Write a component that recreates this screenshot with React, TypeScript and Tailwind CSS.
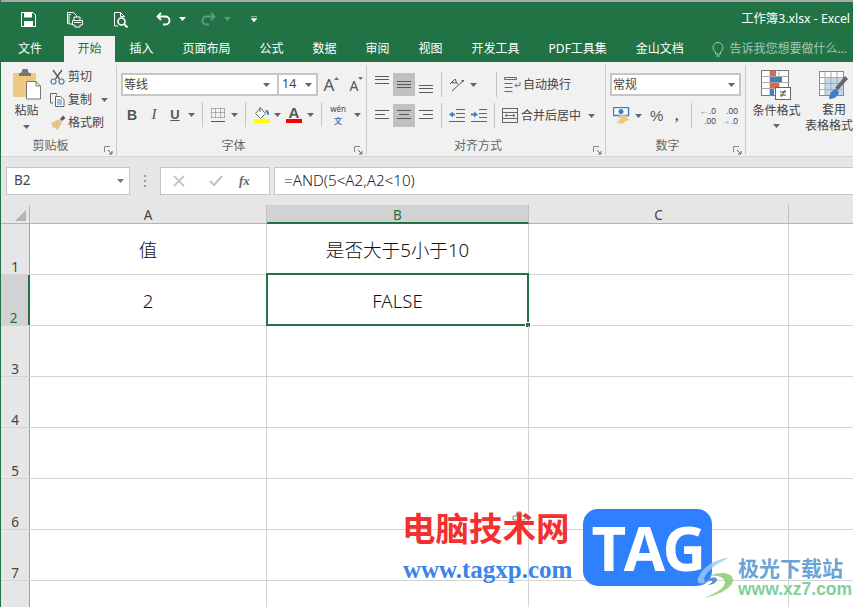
import React from "react";

const Arrow = ({ c = "#666", className = "" }: { c?: string; className?: string }) => (
  <svg width="7" height="4" viewBox="0 0 7 4" className={`shrink-0 ${className}`}>
    <path d="M0 0h7L3.5 4z" fill={c} />
  </svg>
);

const Launcher = () => (
  <svg width="9" height="9" viewBox="0 0 9 9" className="shrink-0">
    <path d="M.5 6V.5H6" fill="none" stroke="#888" />
    <path d="M4 4l4 4M8 5v3H5" fill="none" stroke="#666" />
  </svg>
);

const Sep = () => <div className="w-px h-[25px] bg-[#c6c6c6] shrink-0" />;

const Lines = ({ rows, hl }: { rows: [number, number, number][]; hl?: boolean }) => (
  <div className={`w-[22px] h-[23px] shrink-0 ${hl ? "bg-[#c0c0c0]" : ""}`}>
    <svg width="22" height="23" viewBox="0 0 22 23">
      {rows.map(([x, y, w], i) => (
        <rect key={i} x={x} y={y} width={w} height="1" fill="#595959" />
      ))}
    </svg>
  </div>
);

const SmallRow = ({ icon, label, arrow }: { icon: React.ReactNode; label: string; arrow?: boolean }) => (
  <div className="h-[23.5px] flex items-center">
    <div className="w-[19px] flex justify-center">{icon}</div>
    <span className="text-[12px] text-[#444] ml-[1px] whitespace-nowrap">{label}</span>
    {arrow && <Arrow className="ml-[9px]" />}
  </div>
);

const Group = ({ w, label, children }: { w: string; label: string; children: React.ReactNode }) => (
  <div className={`${w} shrink-0 h-[90px] border-r border-[#c9c9c9] flex flex-col mt-[3px]`}>
    <div className="h-[69px] flex">{children}</div>
    <div className="flex-1 flex items-center relative pt-[2px] pr-[16px]">
      <span className="flex-1 text-center text-[12px] text-[#666]">{label}</span>
      <span className="absolute right-[3px] bottom-[0px]">
        <Launcher />
      </span>
    </div>
  </div>
);

const Col = ({ t, sel, w }: { t: string; sel?: boolean; w: string }) => (
  <div className={`${w} shrink-0 text-center text-[13.5px] leading-[20px] h-[19px] border-r ${sel ? "bg-[#d2d2d2] text-[#217346] border-[#c0c0c0] border-b-2 border-b-[#217346]" : "text-[#444] border-[#c0c0c0] border-b border-b-[#b4b4b4]"}`}>
    {t}
  </div>
);

const Cell = ({ w, children, last }: { w: string; children?: React.ReactNode; last?: boolean }) => (
  <div className={`${w} shrink-0 h-full flex items-center justify-center text-[18.6px] text-[#111] font-light pt-[1px] ${last ? "" : "border-r border-[#d4d4d4]"}`}>{children}</div>
);

const Row = ({ n, a, b, sel }: { n?: number; a?: string; b?: string; sel?: boolean }) => (
  <div className="h-[51px] flex border-b border-[#d4d4d4] shrink-0">
    <div className={`w-[29px] shrink-0 flex items-end justify-center text-[13.5px] leading-[13px] border-r ${sel ? "bg-[#d2d2d2] text-[#217346] border-r-2 border-r-[#217346] pr-[2px]" : "bg-[#e6e6e6] text-[#444] border-[#9f9f9f]"}`}>
      {n}
    </div>
    <Cell w="w-[237px]">{a}</Cell>
    <div className="relative shrink-0 w-[262px] h-full">
      <Cell w="w-[262px]">{b}</Cell>
      {sel && (
        <div className="absolute left-[-1px] top-[-2px] w-[263px] h-[53px] border-2 border-[#217346]">
          <div className="absolute right-[-4px] bottom-[-4px] w-[6px] h-[6px] bg-[#217346] border border-white" />
        </div>
      )}
    </div>
    <Cell w="w-[260px]" />
    <Cell w="flex-1" last />
  </div>
);

export default function App() {
  const tabs = ["插入", "页面布局", "公式", "数据", "审阅", "视图", "开发工具", "PDF工具集", "金山文档"];
  return (
    <div className="relative w-[853px] h-[607px] overflow-hidden bg-white select-none border-l border-[#217346]" style={{ fontFamily: '"Noto Sans","Noto Sans CJK SC",sans-serif' }}>
      {/* title + tabs */}
      <div className="-ml-px bg-[#217346] border-t-2 border-[#a9a9a9] h-[62px] flex flex-col">
        <div className="h-[34px] flex items-center text-white">
          <div className="ml-[21px] w-[45px]">
            <svg width="15" height="15" viewBox="0 0 15 15">
              <path d="M.5.5h11.5l2.500 2.500v11.500H.5z" fill="none" stroke="#fff" />
              <path d="M3 1h8v4.500H3zM3 9h9v5.500H3z" fill="#fff" />
            </svg>
          </div>
          <div className="w-[47px]">
            <svg width="17" height="17" viewBox="0 0 17 17">
              <path d="M1.500 13V1.500h6l3 3V6M5 3.500h-2V13h3" fill="none" stroke="#fff" />
              <path d="M8 9V6h6v3M6.500 9.500h10v4.500h-2.500v2H9v-2H6.500z" fill="none" stroke="#fff" />
              <rect x="8" y="11" width="7" height="1" fill="#fff" />
            </svg>
          </div>
          <div className="w-[43px]">
            <svg width="16" height="17" viewBox="0 0 16 17">
              <path d="M5 15H1.500V1.500h6l3.500 3.500v1.500M7.500 1.500v4H11" fill="none" stroke="#fff" />
              <circle cx="8.500" cy="10.500" r="3.500" fill="none" stroke="#fff" strokeWidth="1.600" />
              <path d="M11 13l3.500 3.500" stroke="#fff" strokeWidth="2" />
            </svg>
          </div>
          <svg width="15" height="14" viewBox="0 0 15 14" className="shrink-0">
            <path d="M5 1L1.500 4.500 5 8M2 4.500h7.500a4 4 0 0 1 0 8H7" fill="none" stroke="#fff" strokeWidth="1.800" />
          </svg>
          <Arrow c="#fff" className="ml-[8px]" />
          <svg width="15" height="14" viewBox="0 0 15 14" className="shrink-0 ml-[15px]">
            <path d="M10 1l3.500 3.500L10 8M13 4.500H5.500a4 4 0 0 0 0 8H8" fill="none" stroke="#5f9c7c" strokeWidth="1.800" />
          </svg>
          <Arrow c="#5f9c7c" className="ml-[8px]" />
          <svg width="6" height="6" viewBox="0 0 6 6" className="shrink-0 ml-[20px]">
            <path d="M0 .5h6M0 2.500h6L3 6z" fill="#fff" stroke="#fff" strokeWidth=".5" />
          </svg>
          <span className="ml-auto mr-[3px] text-[12.3px] text-white whitespace-nowrap">工作簿3.xlsx - Excel</span>
        </div>
        <div className="h-[26px] flex items-stretch text-[12px] text-white">
          <div className="w-[52px] ml-[4px] mr-[8px] flex items-center justify-center">文件</div>
          <div className="w-[51px] flex items-center justify-center bg-[#f1f1f1] text-[#217346]">开始</div>
          {tabs.map((t) => (
            <div key={t} className="px-[14.5px] flex items-center whitespace-nowrap">{t}</div>
          ))}
          <div className="flex items-center ml-[14px] text-[#a7c7b5]">
            <svg width="12" height="15" viewBox="0 0 12 15" className="shrink-0 mr-[5px]">
              <path d="M3.500 10C2 8.500 1 7.500 1 5.500a5 5 0 0 1 10 0c0 2-1 3-2.500 4.500V12h-5zM4 14h4" fill="none" stroke="#a7c7b5" />
            </svg>
            <span className="whitespace-nowrap">告诉我您想要做什么...</span>
          </div>
        </div>
      </div>

      {/* ribbon */}
      <div className="h-[95px] bg-[#f1f1f1] border-b border-[#d4d4d4] flex overflow-hidden">
        <Group w="w-[116px]" label="剪贴板">
          <div className="w-[48px] flex flex-col items-center pl-[3px] pt-[4px]">
            <svg width="30" height="31" viewBox="0 0 30 31" className="shrink-0">
              <rect x="1" y="4" width="23" height="24" rx="1" fill="#efc981" />
              <path d="M9 4l1-2a3 3 0 0 1 6 0l1 2h2v3H7V4z" fill="#777" />
              <path d="M14.500 12.500H24l4.500 4.500v13h-14z" fill="#fff" stroke="#777" />
              <path d="M24 12.500V17h4.500" fill="none" stroke="#777" />
            </svg>
            <span className="text-[12px] text-[#444] leading-[17px] mt-[2px]">粘贴</span>
            <Arrow className="mt-[6px]" />
          </div>
          <div className="flex flex-col pt-[0px] -ml-[1px]">
            <SmallRow
              label="剪切"
              icon={
                <svg width="15" height="16" viewBox="0 0 15 16">
                  <path d="M3 1l6.500 9M12 1L5.500 10" stroke="#555" strokeWidth="1.300" />
                  <circle cx="3.500" cy="12.500" r="2.500" fill="none" stroke="#3f7fc1" strokeWidth="1.200" />
                  <circle cx="11.500" cy="12.500" r="2.500" fill="none" stroke="#3f7fc1" strokeWidth="1.200" />
                </svg>
              }
            />
            <SmallRow
              label="复制"
              arrow
              icon={
                <svg width="15" height="14" viewBox="0 0 15 14">
                  <path d="M.5.5h6v2M3 10H.5V.5" fill="none" stroke="#666" />
                  <path d="M5.500 3.500h5l3.500 3v7H5.500z" fill="#fff" stroke="#666" />
                  <path d="M7 7h5M7 9h5M7 11h5" stroke="#3f7fc1" />
                </svg>
              }
            />
            <SmallRow
              label="格式刷"
              icon={
                <svg width="16" height="15" viewBox="0 0 16 15">
                  <path d="M10 4l3-3.500 2.500 2.500L12 6z" fill="#595959" />
                  <path d="M1 8l8-4 3 3-4 8L5 13l-1-1-1 1z" fill="#e8c387" />
                </svg>
              }
            />
          </div>
        </Group>

        <Group w="w-[250px]" label="字体">
          <div className="flex flex-col pl-[4px]">
            <div className="h-[23px] mt-[8px] flex items-center">
              <div className="w-[157px] h-[23px] bg-white border-2 border-[#c6c6c6] border-r flex items-center px-[1px] justify-between pr-[7px]">
                <span className="text-[12px] text-[#444] leading-none">等线</span>
                <Arrow />
              </div>
              <div className="w-[40px] h-[23px] bg-white border-2 border-[#c6c6c6] border-l flex items-center justify-between pl-[3px] pr-[4px]">
                <span className="text-[12.5px] text-[#444] leading-none">14</span>
                <Arrow />
              </div>
              <div className="w-[25px] ml-[1px] flex justify-center items-start relative">
                <span className="text-[17px] text-[#555] leading-none">A</span>
                <svg width="5" height="3" viewBox="0 0 5 3" className="mt-[1px]"><path d="M0 3h5L2.500 0z" fill="#3f7fc1" /></svg>
              </div>
              <div className="w-[25px] flex justify-center items-start">
                <span className="text-[14px] text-[#555] leading-none mt-[3px]">A</span>
                <svg width="5" height="3" viewBox="0 0 5 3" className="mt-[1px]"><path d="M0 0h5L2.500 3z" fill="#3f7fc1" /></svg>
              </div>
            </div>
            <div className="h-[25px] mt-[6px] flex items-center text-[#555]">
              <span className="w-[14px] ml-[4px] text-center font-bold text-[14px] leading-none" style={{ fontFamily: '"Liberation Sans",sans-serif' }}>B</span>
              <span className="w-[14px] ml-[8px] text-center italic text-[15px] leading-none" style={{ fontFamily: '"Liberation Serif",serif' }}>I</span>
              <span className="w-[14px] ml-[7px] text-center font-bold text-[13px] leading-none underline" style={{ fontFamily: '"Liberation Sans",sans-serif' }}>U</span>
              <Arrow className="ml-[6px]" />
              <div className="ml-[7px]"><Sep /></div>
              <svg width="14" height="14" viewBox="0 0 14 14" className="ml-[8px] shrink-0">
                <path d="M.5.500h13M.5 4.500h13M.5 9.500h13M.5.500v9M4.500.500v9M9.500.500v9M13.500.500v9" stroke="#777" strokeDasharray="1 1" fill="none" />
                <path d="M0 13.500h14" stroke="#555" />
              </svg>
              <Arrow className="ml-[6px]" />
              <div className="ml-[7px]"><Sep /></div>
              <div className="ml-[8px] w-[16px] flex flex-col items-center">
                <svg width="16" height="12" viewBox="0 0 16 12">
                  <path d="M6.500 1L1.500 6.500l5 5 5-5z" fill="#fff" stroke="#666" />
                  <path d="M6 0v5" stroke="#666" />
                  <path d="M11 3c2.500-.5 4 1 4 3.500 0 1-.5 1.500-1 1.500s-1-.5-1-1.500z" fill="#3f7fc1" />
                </svg>
                <div className="w-[16px] h-[4px] bg-[#ffff00]" />
              </div>
              <Arrow className="ml-[4px]" />
              <div className="ml-[5px] w-[16px] flex flex-col items-center">
                <span className="text-[15px] font-semibold text-[#555] leading-[12px]" style={{ fontFamily: '"Liberation Sans",sans-serif' }}>A</span>
                <div className="w-[16px] h-[4px] bg-[#ff0000]" />
              </div>
              <Arrow className="ml-[5px]" />
              <div className="ml-[7px]"><Sep /></div>
              <div className="w-[16px] ml-[8px] flex flex-col items-center">
                <span className="text-[8px] leading-[11.5px] text-[#444] whitespace-nowrap">wén</span>
                <span className="text-[8px] leading-[11.5px] font-bold text-[#3f7fc1]">文</span>
              </div>
              <Arrow className="ml-[8px]" />
            </div>
          </div>
        </Group>

        <Group w="w-[239px]" label="对齐方式">
          <div className="flex flex-col pl-[4px]">
            <div className="h-[23px] mt-[8px] flex items-center">
              <Lines rows={[[4, 3, 14], [4, 6, 14], [4, 10, 14]]} />
              <Lines hl rows={[[4, 8, 14], [4, 11, 14], [4, 14, 14]]} />
              <Lines rows={[[4, 12, 14], [4, 15, 14], [4, 19, 14]]} />
              <div className="ml-[4px]"><Sep /></div>
              <svg width="17" height="16" viewBox="0 0 17 16" className="ml-[7px] shrink-0">
                <path d="M1 7l5-5 2.500 5.500M3 5.500l4 .5" fill="none" stroke="#555" />
                <path d="M3 14L15 3" stroke="#555" />
                <path d="M15 3l-3 .5 2 2z" fill="#555" />
              </svg>
              <Arrow className="ml-[4px]" />
              <div className="ml-[19px]"><Sep /></div>
              <div className="ml-[7px] flex items-center">
                <svg width="17" height="15" viewBox="0 0 17 15" className="shrink-0">
                  <path d="M.5.500h12v2H.5zM.5 6.500h8M.5 10.500h8M.5 14.500h8" fill="none" stroke="#666" />
                  <path d="M16 5v3.500h-5M13 6.500L11 8.500l2 2" fill="none" stroke="#3f7fc1" />
                </svg>
                <span className="ml-[2px] text-[12px] text-[#444] whitespace-nowrap">自动换行</span>
              </div>
            </div>
            <div className="h-[23px] mt-[8px] flex items-center">
              <Lines rows={[[4, 6, 14], [4, 10, 10], [4, 14, 14]]} />
              <Lines hl rows={[[4, 6, 14], [6, 10, 10], [4, 14, 14]]} />
              <Lines rows={[[4, 6, 14], [8, 10, 10], [4, 14, 14]]} />
              <div className="ml-[4px]"><Sep /></div>
              <svg width="16" height="13" viewBox="0 0 16 13" className="ml-[7px] shrink-0">
                <path d="M7 .500h9M7 4.500h9M7 8.500h9M0 12.500h16" stroke="#666" fill="none" />
                <path d="M0 5.500L4 2.500v2h2v2H4v2z" fill="#3f7fc1" />
              </svg>
              <svg width="16" height="13" viewBox="0 0 16 13" className="ml-[6px] shrink-0">
                <path d="M8 .500h8M8 4.500h8M8 8.500h8M0 12.500h16" stroke="#666" fill="none" />
                <path d="M7 5.500L3 2.500v2H0v2h3v2z" fill="#3f7fc1" />
              </svg>
              <div className="ml-[7px]"><Sep /></div>
              <div className="ml-[7px] flex items-center">
                <svg width="17" height="15" viewBox="0 0 17 15" className="shrink-0">
                  <rect x=".5" y=".5" width="15" height="14" fill="none" stroke="#666" />
                  <path d="M.5 4.500h15M.5 10.500h15" stroke="#666" />
                  <path d="M3 7.500h10M5 6l-2 1.500L5 9M11 6l2 1.500L11 9" stroke="#3f7fc1" fill="none" />
                </svg>
                <span className="ml-[2px] text-[12px] text-[#444] whitespace-nowrap">合并后居中</span>
                <Arrow className="ml-[7px]" />
              </div>
            </div>
          </div>
        </Group>

        <Group w="w-[140px]" label="数字">
          <div className="flex flex-col pl-[4px]">
            <div className="w-[131px] h-[23px] mt-[8px] bg-white border-2 border-[#c6c6c6] flex items-center justify-between pl-[1px] pr-[4px]">
              <span className="text-[12px] text-[#444] leading-none">常规</span>
              <Arrow />
            </div>
            <div className="h-[23px] mt-[8px] flex items-center">
              <svg width="17" height="17" viewBox="0 0 17 17" className="ml-[3px] shrink-0">
                <path d="M.5.500h15v8h-15z" fill="#fff" stroke="#3f7fc1" strokeWidth="1.500" />
                <circle cx="8" cy="4.500" r="2.500" fill="#3f7fc1" />
                <ellipse cx="10" cy="9.500" rx="5" ry="1.600" fill="#edc87e" />
                <ellipse cx="11" cy="12.500" rx="5" ry="1.600" fill="#edc87e" />
                <ellipse cx="8" cy="15" rx="4" ry="1.500" fill="#edc87e" />
              </svg>
              <Arrow className="ml-[5px]" />
              <span className="ml-[8px] text-[15px] leading-none text-[#555] w-[16px]" style={{ fontFamily: '"Liberation Sans",sans-serif' }}>%</span>
              <span className="ml-[9px] text-[14px] font-bold leading-none text-[#555] w-[6px]" style={{ fontFamily: '"Liberation Serif",serif' }}>,</span>
              <div className="ml-[10px]"><Sep /></div>
              <div className="ml-[7px] w-[17px] text-[8.5px] leading-[10px] text-[#444]" style={{ fontFamily: '"Liberation Sans",sans-serif' }}>
                <div className="flex items-center justify-end"><span className="text-[#3f7fc1] mr-[1px]">←</span>.0</div>
                <div className="text-right">.00</div>
              </div>
              <div className="ml-[5px] w-[17px] text-[8.5px] leading-[10px] text-[#444]" style={{ fontFamily: '"Liberation Sans",sans-serif' }}>
                <div className="text-right">.00</div>
                <div className="flex items-center justify-end"><span className="text-[#3f7fc1] mr-[1px]">→</span>.0</div>
              </div>
            </div>
          </div>
        </Group>

        <div className="flex shrink-0 mt-[3px]">
          <div className="w-[60px] flex flex-col items-center pt-[5px] pl-[1px]">
            <svg width="31" height="31" viewBox="0 0 31 31" className="shrink-0">
              <rect x=".5" y=".5" width="27" height="25" fill="#fff" stroke="#777" />
              <path d="M9 .5v25M18 .5v25M.5 6.500h27M.5 12.500h27M.5 18.500h27" stroke="#aaa" />
              <rect x="9" y="1" width="6" height="5" fill="#d9694a" />
              <rect x="9" y="7" width="12" height="5" fill="#3f7fc1" />
              <rect x="9" y="13" width="9" height="5" fill="#d9694a" />
              <rect x="9" y="19" width="4" height="6" fill="#3f7fc1" />
              <rect x="14.500" y="17.500" width="15" height="12" fill="#fff" stroke="#666" />
              <path d="M19 22h6M19 25h6M24 20l-4 7" stroke="#444" />
            </svg>
            <span className="text-[12px] text-[#444] leading-[17px] mt-[1px] whitespace-nowrap">条件格式</span>
            <Arrow className="mt-[5px]" />
          </div>
          <div className="w-[46px] flex flex-col items-center pt-[6px] pl-[10px]">
            <svg width="30" height="30" viewBox="0 0 30 30" className="shrink-0">
              <rect x=".5" y=".5" width="24" height="24" fill="#fff" stroke="#888" />
              <rect x="6" y="7" width="18" height="17" fill="#c5d7ec" />
              <path d="M6 .5v24M12 .5v24M18 .5v24M.5 6.500h24M.5 12.500h24M.5 18.500h24" stroke="#aaa" />
              <path d="M16 17l10-12 3 3-10 11z" fill="#666" />
              <path d="M10 28c0-5 3-9 7-10l3 3c-1 4-4 7-10 7z" fill="#3f7fc1" />
            </svg>
            <span className="text-[12px] text-[#444] leading-[16px] mt-[1px]">套用</span>
            <span className="text-[12px] text-[#444] leading-[16px] whitespace-nowrap -ml-[10px]">表格格式</span>
          </div>
        </div>
      </div>

      {/* formula bar */}
      <div className="h-[48px] bg-[#e6e6e6] flex items-center pl-[5px] pb-[1px]">
        <div className="w-[124px] h-[28px] bg-white border border-[#c6c6c6] flex items-center justify-between pl-[7px] pr-[3px] shrink-0">
          <span className="text-[13.5px] text-[#444]">B2</span>
          <Arrow c="#777" className="mr-[2px]" />
        </div>
        <div className="w-[30px] flex flex-col items-center gap-[3px] shrink-0">
          <div className="w-[2px] h-[2px] bg-[#999]" />
          <div className="w-[2px] h-[2px] bg-[#999]" />
          <div className="w-[2px] h-[2px] bg-[#999]" />
        </div>
        <div className="w-[110px] h-[28px] bg-white border border-[#c6c6c6] flex items-center shrink-0">
          <svg width="12" height="12" viewBox="0 0 12 12" className="ml-[12px] shrink-0"><path d="M1 1l10 10M11 1L1 11" stroke="#c4c4c4" strokeWidth="1.800" /></svg>
          <svg width="14" height="12" viewBox="0 0 14 12" className="ml-[24px] shrink-0"><path d="M1 6l4 4 8-9" fill="none" stroke="#c4c4c4" strokeWidth="2" /></svg>
          <span className="ml-[16px] text-[13px] italic font-bold text-[#666] leading-none" style={{ fontFamily: '"Liberation Serif",serif' }}>fx</span>
        </div>
        <div className="ml-[4px] flex-1 h-[28px] bg-white border border-[#c6c6c6] border-r-0 flex items-center pl-[9px] text-[15.2px] font-light text-[#222]">
          =AND(5&lt;A2,A2&lt;10)
        </div>
      </div>

      {/* sheet */}
      <div className="flex bg-[#e6e6e6]">
        <div className="w-[29px] h-[19px] shrink-0 border-r border-b border-[#b4b4b4] flex items-end justify-end pb-[2px] pr-[3px]">
          <svg width="11" height="11" viewBox="0 0 11 11"><path d="M11 0v11H0z" fill="#b4b4b4" /></svg>
        </div>
        <Col t="A" w="w-[237px]" />
        <Col t="B" w="w-[262px]" sel />
        <Col t="C" w="w-[260px]" />
        <div className="flex-1 h-[19px] border-b border-[#b4b4b4]" />
      </div>
      <div className="flex flex-col">
        <Row n={1} a="值" b="是否大于5小于10" />
        <Row n={2} a="2" b="FALSE" sel />
        <Row n={3} />
        <Row n={4} />
        <Row n={5} />
        <Row n={6} />
        <Row n={7} />
        <Row />
      </div>

      {/* cursor */}
      <svg width="14" height="14" viewBox="0 0 14 14" className="absolute left-[511px] top-[511px]">
        <path d="M5 1h4v4h4v4H9v4H5V9H1V5h4z" fill="#fff" stroke="#888" />
      </svg>

      {/* watermarks */}
      <div className="absolute left-[401px] top-[508px] text-[33.5px] leading-[40px] font-bold text-[#f23030] whitespace-nowrap">电脑技术网</div>
      <div className="absolute left-[402px] top-[556px] text-[25px] leading-[28px] font-bold text-[#3c84e8] whitespace-nowrap" style={{ fontFamily: '"Liberation Serif",serif' }}>www.tagxp.com</div>
      <div className="absolute left-[582px] top-[509px] w-[129px] h-[77px] rounded-[15px] bg-[#2f80ff] flex items-center justify-center text-white font-bold text-[60px] leading-none tracking-[-2.5px]" style={{ fontFamily: '"Open Sans",sans-serif' }}>TAG</div>
      <svg width="44" height="44" viewBox="0 0 44 44" className="absolute left-[694px] top-[556px]">
        <path d="M34 2C22 2 8 10 3 22c-2 6 3 6 8 5C5 22 16 10 34 2z" fill="#9ccbee" opacity=".8" />
        <path d="M14 20c10-5 24-4 24 4 0 8-16 16-30 18 12-4 22-10 22-16 0-4-8-8-16-6z" fill="#8ccb72" opacity=".85" />
        <path d="M8 28c4-6 12-8 14-5 1 2-3 6-9 6 3-2 5-3 4-4-2-1-6 1-9 3z" fill="#5f93c9" />
      </svg>
      <div className="absolute left-[737px] top-[555px] text-[21px] leading-[27px] font-bold text-[#6ba3d6] whitespace-nowrap">极光下载站</div>
      <div className="absolute left-[737px] top-[578px] text-[17.5px] leading-[22px] font-semibold text-[#7fd09b] whitespace-nowrap" style={{ fontFamily: '"Liberation Sans",sans-serif' }}>www.xz7.com</div>
    </div>
  );
}
